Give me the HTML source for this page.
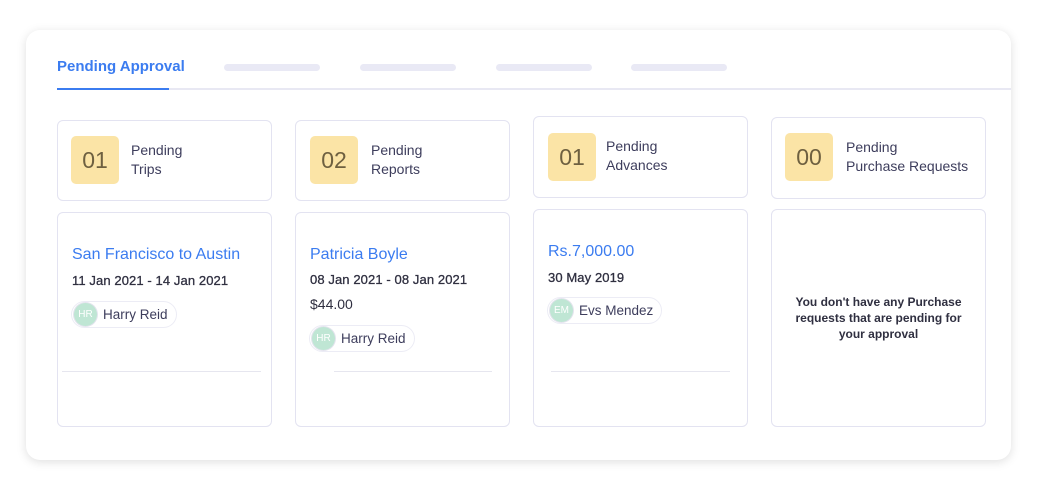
<!DOCTYPE html><html><head><style>
*{margin:0;padding:0;box-sizing:border-box}
body{width:1037px;height:491px;background:#fff;font-family:"Liberation Sans",sans-serif;position:relative;overflow:hidden}
.a{position:absolute}
.outer{left:26px;top:30px;width:985px;height:430px;border-radius:14px;background:#fff;box-shadow:0 2px 10px rgba(0,0,0,.13)}
.ph{top:64px;height:7px;width:96px;border-radius:4px;background:#e9e9f5}
.card{border:1px solid #e3e3f1;border-radius:6px;background:#fff}
.badge{width:48px;height:48px;background:#fbe4a6;border-radius:5px;color:#6e6040;font-size:23px;display:flex;align-items:center;justify-content:center}
.lbl{font-size:14px;line-height:19px;color:#3d3d5c}
.title{font-size:16px;color:#3b7cf0}
.dt{font-size:13px;color:#2f2f40;letter-spacing:.1px;-webkit-text-stroke:.3px #2f2f40}
.chip{height:27px;border:1px solid #ececf5;border-radius:14px;display:flex;align-items:center;padding:0 8px 0 2px;font-size:13.5px;color:#3d3d5c}
.av{width:23px;height:23px;border-radius:50%;background:#bfe6d4;color:#fff;font-size:10px;display:flex;align-items:center;justify-content:center;margin-right:6px;box-shadow:0 0 0 1px #e4e4ee}
.ln{height:1px;background:#e6e6ef}
</style></head><body>
<div class="a outer"></div>
<div class="a" style="left:57px;top:58px;font-size:15px;font-weight:bold;color:#3b7cf0">Pending Approval</div>
<div class="a" style="left:57px;top:88px;width:954px;height:2px;background:#e8e8f3"></div>
<div class="a" style="left:57px;top:88px;width:112px;height:2px;background:#3b7cf0"></div>
<div class="a ph" style="left:224px"></div><div class="a ph" style="left:360px"></div><div class="a ph" style="left:496px"></div><div class="a ph" style="left:631px"></div>

<div class="a card" style="left:57px;top:120px;width:215px;height:81px"></div>
<div class="a badge" style="left:71px;top:136px">01</div>
<div class="a lbl" style="left:131px;top:141px">Pending<br>Trips</div>
<div class="a card" style="left:57px;top:212px;width:215px;height:215px"></div>
<div class="a title" style="left:72px;top:246px">San Francisco to Austin</div>
<div class="a dt" style="left:72px;top:273px">11 Jan 2021 - 14 Jan 2021</div>
<div class="a chip" style="left:71px;top:301px"><div class="av">HR</div>Harry Reid</div>
<div class="a ln" style="left:62px;top:371px;width:199px"></div>

<div class="a card" style="left:295px;top:120px;width:215px;height:81px"></div>
<div class="a badge" style="left:310px;top:136px">02</div>
<div class="a lbl" style="left:371px;top:141px">Pending<br>Reports</div>
<div class="a card" style="left:295px;top:212px;width:215px;height:215px"></div>
<div class="a title" style="left:310px;top:246px">Patricia Boyle</div>
<div class="a dt" style="left:310px;top:272px">08 Jan 2021 - 08 Jan 2021</div>
<div class="a" style="left:310px;top:296px;font-size:14px;color:#2f2f40">$44.00</div>
<div class="a chip" style="left:309px;top:325px"><div class="av">HR</div>Harry Reid</div>
<div class="a ln" style="left:334px;top:371px;width:158px"></div>

<div class="a card" style="left:533px;top:116px;width:215px;height:82px"></div>
<div class="a badge" style="left:548px;top:133px">01</div>
<div class="a lbl" style="left:606px;top:137px">Pending<br>Advances</div>
<div class="a card" style="left:533px;top:209px;width:215px;height:218px"></div>
<div class="a title" style="left:548px;top:243px">Rs.7,000.00</div>
<div class="a dt" style="left:548px;top:270px">30 May 2019</div>
<div class="a chip" style="left:547px;top:297px"><div class="av">EM</div>Evs Mendez</div>
<div class="a ln" style="left:551px;top:371px;width:179px"></div>

<div class="a card" style="left:771px;top:117px;width:215px;height:82px"></div>
<div class="a badge" style="left:785px;top:133px">00</div>
<div class="a lbl" style="left:846px;top:138px">Pending<br>Purchase Requests</div>
<div class="a card" style="left:771px;top:209px;width:215px;height:218px"></div>
<div class="a" style="left:771px;top:294px;width:215px;text-align:center;font-size:12px;line-height:16px;font-weight:bold;color:#2f2f40">You don't have any Purchase<br>requests that are pending for<br>your approval</div>
</body></html>
